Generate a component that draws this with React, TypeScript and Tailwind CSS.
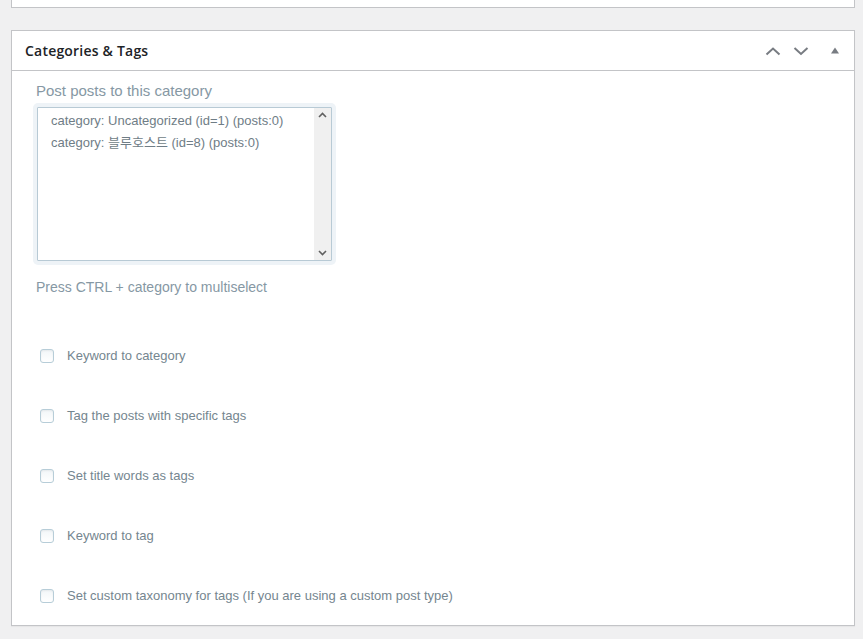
export default function App() {
  const options = [
    "category: Uncategorized (id=1) (posts:0)",
    "category: 블루호스트 (id=8) (posts:0)",
  ];
  const checks = [
    "Keyword to category",
    "Tag the posts with specific tags",
    "Set title words as tags",
    "Keyword to tag",
    "Set custom taxonomy for tags (If you are using a custom post type)",
  ];

  return (
    <div className="w-[863px] h-[639px] overflow-hidden bg-[#f0f0f1] pl-[11px] pr-[8px]">
      {/* previous box (cut off) */}
      <div className="h-[8px] bg-white border border-t-0 border-[#c3c4c7]" />

      {/* Categories & Tags box */}
      <div className="mt-[22px] bg-white border border-[#c3c4c7] shadow-[0_1px_1px_rgba(0,0,0,0.04)]">
        <div className="h-[40px] flex items-center justify-between border-b border-[#c3c4c7] pl-[13px] pr-[11px]">
          <h2 className="text-[14px] font-semibold text-[#1d2327] font-['Open_Sans',sans-serif] tracking-[0.2px]">
            Categories &amp; Tags
          </h2>
          <div className="flex items-center">
            <svg width="16" height="16" viewBox="0 0 16 16" fill="none" stroke="#787c82" strokeWidth="2">
              <path d="M1.5 11.5 8 5.5l6.5 6" />
            </svg>
            <svg width="16" height="16" viewBox="0 0 16 16" fill="none" stroke="#787c82" strokeWidth="2" className="ml-[12px]">
              <path d="M1.5 5 8 11l6.5-6" />
            </svg>
            <svg width="16" height="16" viewBox="0 0 16 16" className="ml-[18px]">
              <path d="M4 10.5 8 4.5l4 6z" fill="#787c82" />
            </svg>
          </div>
        </div>

        <div className="pl-[24px] pt-[9px] pb-[18px] font-['Liberation_Sans','Noto_Sans_CJK_KR',sans-serif]">
          <div className="text-[15px] leading-[22px] text-[#8698a4]">Post posts to this category</div>

          <div className="mt-[1px] -ml-[3px] w-[303px] p-[4px] rounded-[5px] bg-[#eef3f7]">
            <div className="h-[154px] flex bg-white border border-[#b8cad5] rounded-[1px]">
              <div className="flex-1 pl-[13px] pt-[2px]">
                {options.map((o) => (
                  <div key={o} className="text-[13px] leading-[22px] text-[#6f7d86]">
                    {o}
                  </div>
                ))}
              </div>
              <div className="w-[17px] bg-[#f0f0f0] flex flex-col justify-between items-center py-[4px]">
                <svg width="9" height="6" viewBox="0 0 9 6" fill="none" stroke="#606060" strokeWidth="1.6">
                  <path d="M1 5 4.5 1.5 8 5" />
                </svg>
                <svg width="9" height="6" viewBox="0 0 9 6" fill="none" stroke="#606060" strokeWidth="1.6">
                  <path d="M1 1 4.5 4.5 8 1" />
                </svg>
              </div>
            </div>
          </div>

          <div className="mt-[11px] text-[14px] leading-[22px] text-[#8698a4]">
            Press CTRL + category to multiselect
          </div>

          <div className="mt-[47px] flex flex-col gap-[38px]">
            {checks.map((c) => (
              <label key={c} className="flex items-center h-[22px]">
                <span className="ml-[4px] w-[14px] h-[14px] rounded-[3px] border border-[#b7cdd8] bg-gradient-to-b from-[#f2f6f8] to-[#ffffff] shadow-[inset_0_1px_2px_rgba(0,0,0,0.06)]" />
                <span className="ml-[13px] text-[13px] text-[#75868f]">{c}</span>
              </label>
            ))}
          </div>
        </div>
      </div>
    </div>
  );
}
